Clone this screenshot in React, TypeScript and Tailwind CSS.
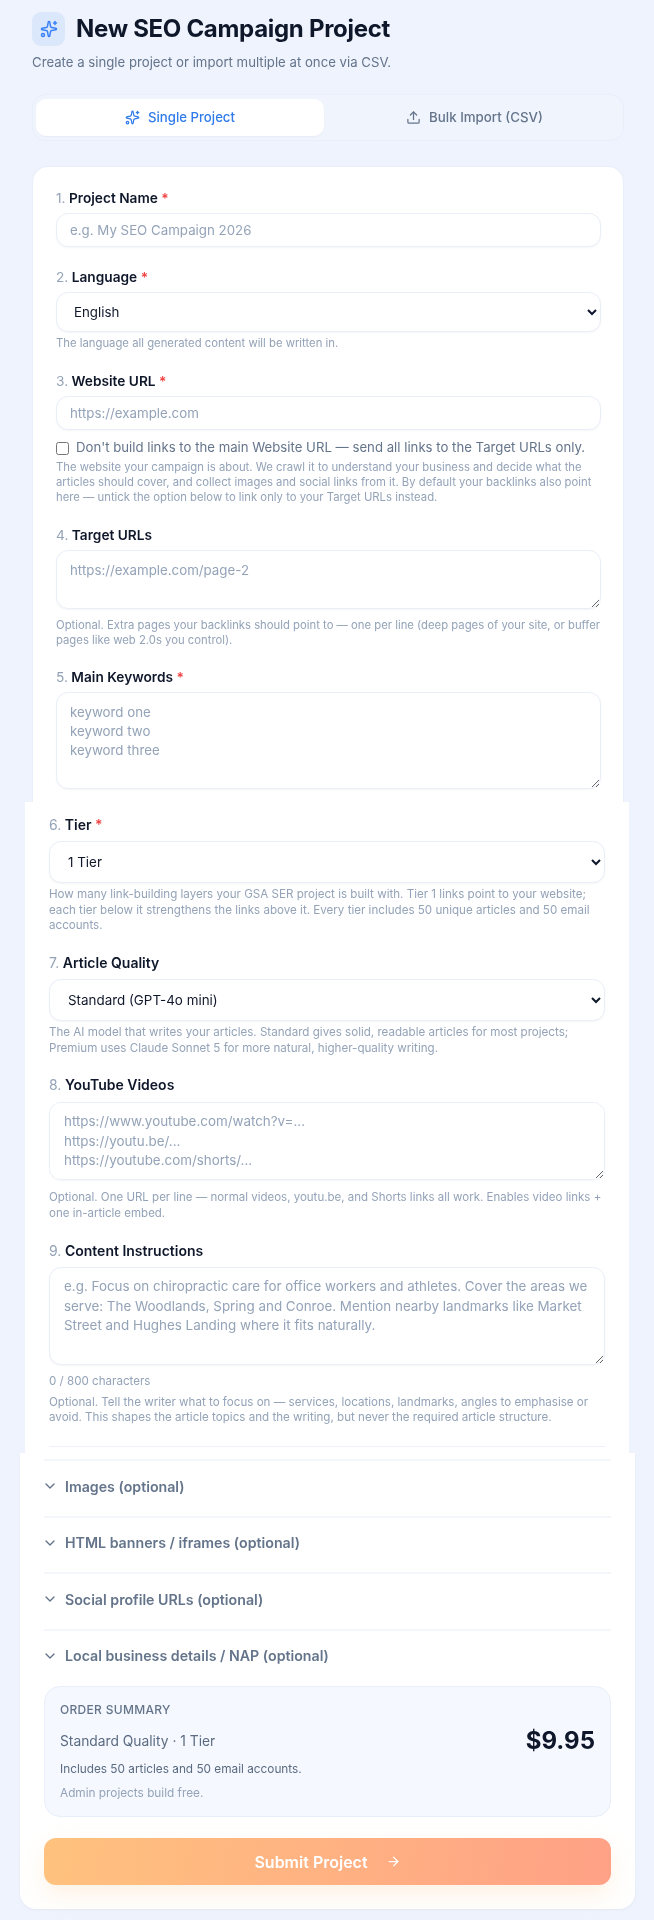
import type { ReactNode } from 'react';
import { ArrowRight, ChevronDown, Sparkles, Upload } from 'lucide-react';

const fieldBox =
  'block w-full rounded-[12px] border border-[#e9eef8] bg-white text-[#0f172a] shadow-[0_1px_2px_rgba(15,23,42,0.04)] outline-none placeholder:text-[#94a3b8]';
const fieldTop = `${fieldBox} px-[13px] text-[13.3px]`;
const fieldMid = `${fieldBox} px-[14px] text-[13.4px]`;

function Label({ n, text, required, className }: { n: number; text: string; required?: boolean; className: string }) {
  return (
    <div className={`h-5 leading-5 font-semibold text-[#0f172a] ${className}`}>
      <span className="font-normal text-[#94a3b8]">{n}.</span> {text}
      {required && <span className="text-[#ef4444]"> *</span>}
    </div>
  );
}

function Hint({ children, className }: { children: ReactNode; className: string }) {
  return <p className={`text-[#94a3b8] ${className}`}>{children}</p>;
}

function Accordion({ title }: { title: string }) {
  return (
    <div className="flex h-[56.5px] items-center gap-[7px] border-t-2 border-[#f3f6fb] pb-[4px] text-[14.2px] font-semibold text-[#64748b]">
      <ChevronDown className="-ml-[2px] h-[16px] w-[16px] text-[#64748b]" />
      {title}
    </div>
  );
}

export default function App() {
  return (
    <div className="min-h-[1920px] bg-[#eef3fd] pt-[12px] pr-[30px] pl-[32px] font-['Inter',sans-serif]">
      {/* Header */}
      <div className="flex items-center gap-[11px]">
        <div className="flex h-[34px] w-[33px] items-center justify-center rounded-[9px] bg-[#dbe7fb]">
          <Sparkles className="h-[18px] w-[18px] text-[#3b82f6]" />
        </div>
        <h1 className="text-[24px] leading-8 font-bold tracking-[-0.3px] text-[#0f172a]">New SEO Campaign Project</h1>
      </div>
      <p className="mt-[6px] text-[13.2px] leading-5 text-[#64748b]">
        Create a single project or import multiple at once via CSV.
      </p>

      {/* Tabs */}
      <div className="mt-[22px] flex h-[47px] rounded-[14px] border border-[#e8eefa] bg-[#f0f4fd] px-[3px] py-[4px]">
        <div className="flex w-[288px] items-center justify-center gap-[8px] rounded-[10px] bg-white text-[13.2px] font-medium text-[#2f7bea] shadow-[0_1px_2px_rgba(15,23,42,0.04)]">
          <Sparkles className="h-[15px] w-[15px]" />
          Single Project
        </div>
        <div className="flex flex-1 items-center justify-center gap-[8px] pl-[5px] text-[13.3px] font-medium text-[#64748b]">
          <Upload className="h-[15px] w-[15px]" />
          Bulk Import (CSV)
        </div>
      </div>

      {/* Form top */}
      <div className="mt-[25px] h-[636px] rounded-t-[16px] border-x border-t border-[#e8eefa] bg-white pt-[21px] pr-[22px] pl-[23px]">
        <Label n={1} text="Project Name" required className="text-[13.7px]" />
        <input className={`${fieldTop} mt-[5px] h-[34px]`} placeholder="e.g. My SEO Campaign 2026" />

        <Label n={2} text="Language" required className="mt-[20px] text-[13.7px]" />
        <select className={`${fieldTop} mt-[5px] h-[40px]`} defaultValue="English">
          <option>English</option>
        </select>
        <Hint className="mt-[4px] text-[11.3px] leading-[15px]">The language all generated content will be written in.</Hint>

        <Label n={3} text="Website URL" required className="mt-[20px] text-[13.7px]" />
        <input className={`${fieldTop} mt-[5px] h-[34px]`} placeholder="https://example.com" />
        <label className="mt-[8px] flex h-5 items-center gap-[7px] text-[13.2px] text-[#64748b]">
          <input type="checkbox" className="m-0 h-[13px] w-[13px]" />
          <span className="whitespace-nowrap">Don't build links to the main Website URL — send all links to the Target URLs only.</span>
        </label>
        <Hint className="mt-[2px] text-[11.3px] leading-[15px]">
          The website your campaign is about. We crawl it to understand your business and decide what the articles
          should cover, and collect images and social links from it. By default your backlinks also point here — untick
          the option below to link only to your Target URLs instead.
        </Hint>

        <Label n={4} text="Target URLs" className="mt-[20px] text-[13.7px]" />
        <textarea className={`${fieldTop} mt-[5px] h-[59px] py-[10px] leading-[19px]`} placeholder="https://example.com/page-2" />
        <Hint className="mt-[9px] text-[11.3px] leading-[15px]">
          Optional. Extra pages your backlinks should point to — one per line (deep pages of your site, or buffer pages
          like web 2.0s you control).
        </Hint>

        <Label n={5} text="Main Keywords" required className="mt-[19px] text-[13.7px]" />
        <textarea
          className={`${fieldTop} mt-[5px] h-[97px] py-[10px] leading-[19px]`}
          placeholder={'keyword one\nkeyword two\nkeyword three'}
        />
      </div>

      {/* Form middle */}
      <div className="-mr-[5px] -ml-[7px] h-[651px] bg-white px-[24px] pt-[13px]">
        <Label n={6} text="Tier" required className="text-[14px]" />
        <select className={`${fieldMid} mt-[6px] h-[42px]`} defaultValue="1 Tier">
          <option>1 Tier</option>
        </select>
        <Hint className="mt-[4px] text-[11.6px] leading-[15.5px]">
          How many link-building layers your GSA SER project is built with. Tier 1 links point to your website; each tier
          below it strengthens the links above it. Every tier includes 50 unique articles and 50 email accounts.
        </Hint>

        <Label n={7} text="Article Quality" className="mt-[19.5px] text-[14px]" />
        <select className={`${fieldMid} mt-[6px] h-[42px]`} defaultValue="Standard (GPT-4o mini)">
          <option>Standard (GPT-4o mini)</option>
        </select>
        <Hint className="mt-[4px] text-[11.6px] leading-[15.5px]">
          The AI model that writes your articles. Standard gives solid, readable articles for most projects; Premium uses
          Claude Sonnet 5 for more natural, higher-quality writing.
        </Hint>

        <Label n={8} text="YouTube Videos" className="mt-[19px] text-[14px]" />
        <textarea
          className={`${fieldMid} mt-[7px] h-[78px] py-[9px] leading-[19.5px]`}
          placeholder={'https://www.youtube.com/watch?v=...\nhttps://youtu.be/...\nhttps://youtube.com/shorts/...'}
        />
        <Hint className="mt-[10px] text-[11.5px] leading-[15.5px]">
          Optional. One URL per line — normal videos, youtu.be, and Shorts links all work. Enables video links + one
          in-article embed.
        </Hint>

        <Label n={9} text="Content Instructions" className="mt-[20px] text-[14px]" />
        <textarea
          className={`${fieldMid} mt-[6px] h-[98px] py-[9px] pr-[10px] leading-[19.5px]`}
          placeholder="e.g. Focus on chiropractic care for office workers and athletes. Cover the areas we serve: The Woodlands, Spring and Conroe. Mention nearby landmarks like Market Street and Hughes Landing where it fits naturally."
        />
        <Hint className="mt-[9px] text-[11.6px] leading-[15.5px]">0 / 800 characters</Hint>
        <Hint className="mt-[5px] text-[11.6px] leading-[15.5px]">
          Optional. Tell the writer what to focus on — services, locations, landmarks, angles to emphasise or avoid. This
          shapes the article topics and the writing, but never the required article structure.
        </Hint>
        <div className="mt-[20px] h-px bg-[#eef2f8]" />
      </div>

      {/* Form bottom */}
      <div className="-mr-[11px] -ml-[12px] h-[456px] rounded-b-[16px] bg-white px-[24px] pt-[6px] shadow-[0_1px_3px_rgba(15,23,42,0.05)]">
        <Accordion title="Images (optional)" />
        <Accordion title="HTML banners / iframes (optional)" />
        <Accordion title="Social profile URLs (optional)" />
        <Accordion title="Local business details / NAP (optional)" />

        <div className="mt-[1px] h-[131px] rounded-[16px] border border-[#e8eefa] bg-[#f5f8fe] px-[15px] pt-[15px]">
          <div className="text-[12px] leading-4 font-medium tracking-[0.3px] text-[#64748b]">ORDER SUMMARY</div>
          <div className="mt-[7px] flex items-center justify-between">
            <span className="text-[13.8px] text-[#5b6b82]">Standard Quality · 1 Tier</span>
            <span className="text-[24px] leading-8 font-bold text-[#0f172a]">$9.95</span>
          </div>
          <p className="mt-[4px] text-[11.8px] leading-4 text-[#5b6b82]">Includes 50 articles and 50 email accounts.</p>
          <p className="mt-[8px] text-[11.8px] leading-4 text-[#94a3b8]">Admin projects build free.</p>
        </div>

        <button className="mt-[21px] flex h-[47px] w-full items-center justify-center gap-[18px] rounded-[12px] bg-[linear-gradient(100deg,#ffc27e,#ffa186)] text-[16px] font-semibold text-white shadow-[0_10px_24px_rgba(251,191,120,0.2)]">
          Submit Project
          <ArrowRight className="h-[15px] w-[15px]" />
        </button>
      </div>
    </div>
  );
}
